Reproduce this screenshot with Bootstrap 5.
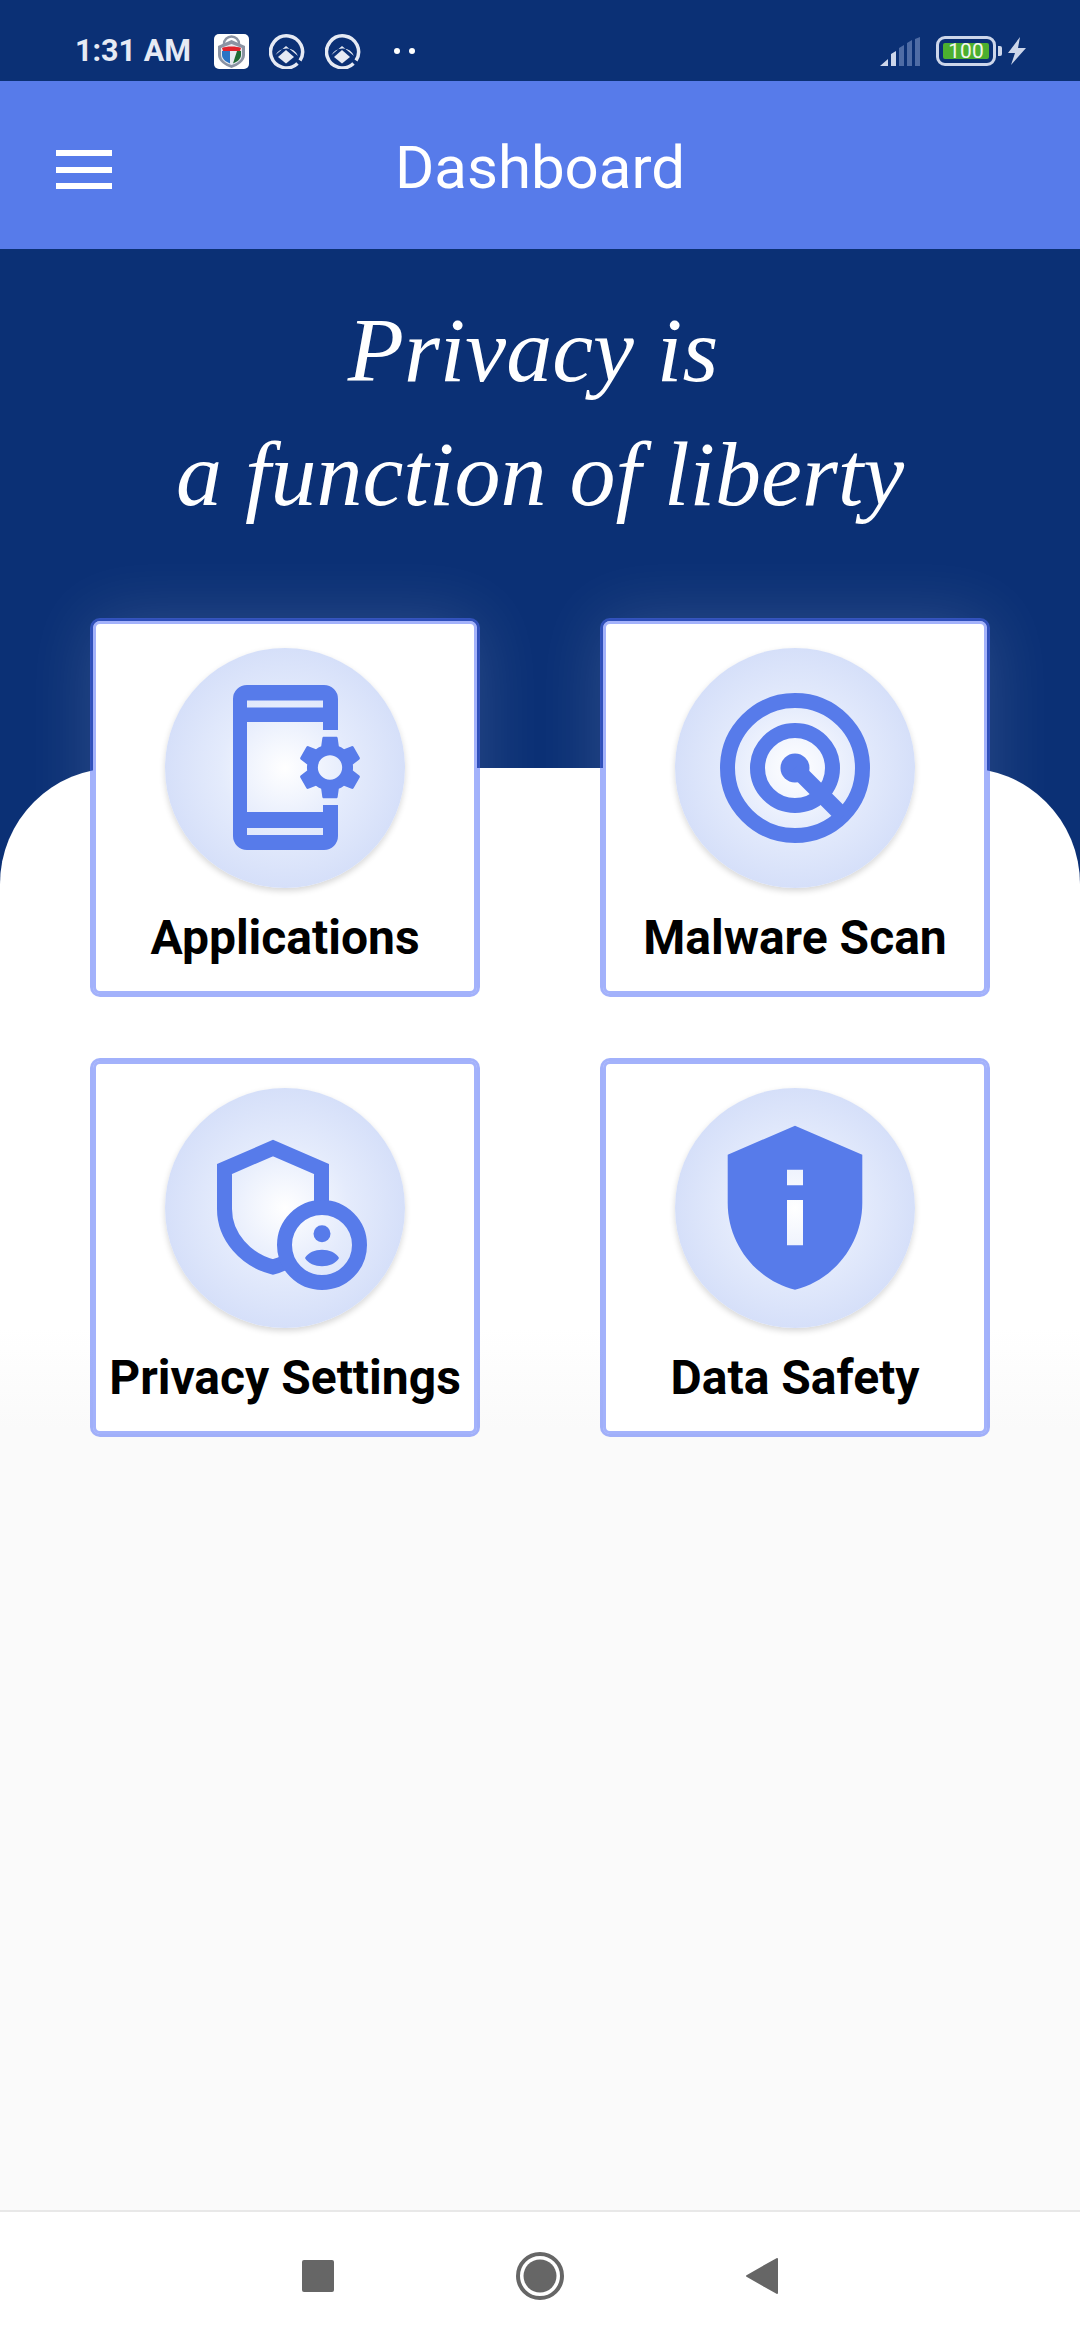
<!DOCTYPE html>
<html lang="en">

<head>
    <meta charset="UTF-8">
    <meta name="viewport" content="width=device-width, initial-scale=1.0">
    <title>Dashboard</title>
    <link href="https://cdn.jsdelivr.net/npm/bootstrap@5.3.0/dist/css/bootstrap.min.css" rel="stylesheet">
    <style>
        body {
            font-family: Roboto, "Liberation Sans", sans-serif;
            background-color: #fafafa;
            width: 1080px;
            height: 2340px;
            overflow: hidden;
        }

        .phone-screen {
            height: 2340px;
            background-color: #0b3075;
        }

        .status-strip {
            height: 81px;
            padding: 21px 54px 0 75px;
            color: #e6eaf4;
        }

        .status-time {
            font-size: 30.500px;
            font-weight: 700;
            width: 119px;
            white-space: nowrap;
        }

        .status-logo {
            margin-left: 20px;
            margin-right: 20px;
        }

        .status-dots {
            margin-left: 32px;
        }

        .battery-box {
            width: 60px;
            height: 30px;
            border: 3px solid #cdd6ea;
            border-radius: 9px;
            padding: 4px;
            margin-left: 16px;
        }

        .battery-level {
            background-color: #4caf2f;
            color: #f2f7ee;
            font-size: 21px;
            line-height: 16px;
            border-radius: 2px;
        }

        .battery-nub {
            width: 4px;
            height: 10px;
            background-color: #cdd6ea;
            border-radius: 0 2px 2px 0;
            margin-left: 2px;
            margin-right: 6px;
        }

        .title-strip {
            height: 168px;
            background-color: #577bea;
            color: #fff;
            padding-top: 5px;
        }

        .menu-bars {
            left: 56px;
            top: 69px;
            width: 56px;
        }

        .menu-bars span {
            display: block;
            height: 6px;
            background-color: #fff;
            margin-bottom: 10.5px;
        }

        .title-text {
            font-size: 60px;
            line-height: 1;
        }

        .quote-band {
            height: 519px;
            padding-top: 39px;
            color: #fff;
            font-family: "Liberation Serif", serif;
            font-style: italic;
            font-size: 92px;
            line-height: 124px;
        }

        .quote-first {
            display: inline-block;
            margin-right: 14px;
        }

        .sheet {
            border-radius: 116px 116px 0 0;
            background: linear-gradient(#fff 560px, #fafafa 660px);
        }

        .tile-grid {
            display: grid;
            grid-template-columns: 390px 390px;
            column-gap: 120px;
            row-gap: 61px;
            justify-content: center;
            margin-top: -150px;
        }

        .tile {
            height: 379px;
            border: 3px solid rgba(80, 108, 247, .53);
            border-radius: 10px;
            background-color: #fff;
            background-clip: padding-box;
            box-shadow: inset 0 0 0 3px #a3b2fb, 0 0 70px rgba(255, 255, 255, .14);
            padding-top: 27px;
        }

        .tile-disc {
            width: 240px;
            height: 240px;
            background: radial-gradient(circle, #fff 0, #e4ebfc 38%, #d5dff9 72%, #ccd8f6 100%);
            box-shadow: 0 3px 6px rgba(0, 0, 0, .16);
        }

        .tile-disc svg {
            display: block;
        }

        .tile-name {
            font-size: 48px;
            font-weight: 700;
            line-height: 54px;
            color: #000;
            margin-top: 23px;
            white-space: nowrap;
        }

        .nav-strip {
            height: 130px;
            background-color: #fff;
            border-top: 2px solid #e8e8e8;
            gap: 182px;
        }
    </style>
</head>

<body>
    <div class="phone-screen d-flex flex-column">
        <!-- status bar -->
        <div class="status-strip d-flex align-items-center flex-shrink-0">
            <span class="status-time">1:31 AM</span>
            <svg class="status-logo" width="35" height="35" viewBox="0 0 35 35">
                <rect width="35" height="35" rx="5" fill="#fff" />
                <path d="M10 13V10a7.500 7.500 0 0 1 15 0v3" fill="none" stroke="#8b93a3" stroke-width="2.500" />
                <path d="M17.500 6 L31 12 V21 C31 27 24 32 17.500 34 C11 32 4 27 4 21 V12Z" fill="#8b93a3" />
                <path d="M17.500 10 L28 14 V21 C28 26 23 29.500 17.500 31 C12 29.500 7 26 7 21 V14Z" fill="#e8ebf0" />
                <path d="M8 14 C12 12 23 12 27 14 L26 17 H9Z" fill="#e0242c" />
                <path d="M8 17 H16 V29.500 C12 28 8 25 8 21Z" fill="#2a74c4" />
                <path d="M27 17 V21 C27 25 23 28 19 29.500 L23 17Z" fill="#1f6b33" />
            </svg>
            <svg width="36" height="36" viewBox="0 0 36 36">
                <path d="M28.500 30.500A16 16 0 1 1 31 27.500" fill="none" stroke="#e6eaf4" stroke-width="3.500" />
                <path d="M6.500 22L17 13L29 23A12.500 12.500 0 0 0 6.500 22Z" fill="#e6eaf4" />
                <path d="M17 17L25 24L17 30.500L9 24Z" fill="#e6eaf4" />
            </svg>
            <svg class="ms-3 ps-1" width="40" height="36" viewBox="0 0 36 36">
                <path d="M28.500 30.500A16 16 0 1 1 31 27.500" fill="none" stroke="#e6eaf4" stroke-width="3.500" />
                <path d="M6.500 22L17 13L29 23A12.500 12.500 0 0 0 6.500 22Z" fill="#e6eaf4" />
                <path d="M17 17L25 24L17 30.500L9 24Z" fill="#e6eaf4" />
            </svg>
            <svg class="status-dots" width="24" height="8" viewBox="0 0 24 8">
                <circle cx="4" cy="4" r="3" fill="#fff" />
                <circle cx="19" cy="4" r="3" fill="#fff" />
            </svg>
            <div class="ms-auto d-flex align-items-center">
                <svg width="40" height="29" viewBox="0 0 40 29">
                    <path d="M0 29 L8 22 V29Z M11 17 L16 14 V29 H11Z" fill="#cdd6ea" />
                    <path d="M19 11 L24 8 V29 H19Z M27 6 L32 3 V29 H27Z M35 2 L40 0 V29 H35Z" fill="#4f6ca5" />
                </svg>
                <div class="battery-box">
                    <div class="battery-level text-center">100</div>
                </div>
                <div class="battery-nub"></div>
                <svg width="18" height="28" viewBox="0 0 18 28">
                    <path d="M12 0 L0 16 H7 L3 28 L18 11 H10Z" fill="#cdd6ea" />
                </svg>
            </div>
        </div>

        <!-- app bar -->
        <div class="title-strip position-relative d-flex align-items-center justify-content-center flex-shrink-0">
            <div class="menu-bars position-absolute"><span></span><span></span><span></span></div>
            <div class="title-text">Dashboard</div>
        </div>

        <!-- quote on the dark band -->
        <div class="quote-band text-center flex-shrink-0"><span class="quote-first">Privacy is</span><br>a function of liberty</div>

        <!-- white sheet, the tiles hang over its top edge -->
        <div class="sheet flex-grow-1">
            <div class="tile-grid">
                <div class="tile d-flex flex-column align-items-center">
                    <div class="tile-disc rounded-circle">
                        <svg width="240" height="240" viewBox="1 1 240 240" fill="#577bea">
                            <path fill-rule="evenodd" d="M83 38H160a14 14 0 0 1 14 14V83H159V75H83V165H159V158H174V189a14 14 0 0 1-14 14H83a14 14 0 0 1-14-14V52a14 14 0 0 1 14-14ZM83 53.500V60.500H159V53.500ZM83 181V188H159V181Z" />
                            <path transform="translate(127.600 82.100) scale(3.200)" d="M19.140 12.940c.04-.3.06-.61.06-.94 0-.32-.02-.64-.07-.94l2.030-1.580c.18-.14.23-.41.12-.61l-1.920-3.320c-.12-.22-.37-.29-.59-.22l-2.390.96c-.5-.38-1.030-.7-1.620-.94l-.36-2.540c-.04-.24-.24-.41-.48-.41h-3.840c-.24 0-.43.17-.47.41l-.36 2.540c-.59.24-1.130.57-1.620.94l-2.390-.96c-.22-.08-.47 0-.59.22L2.740 8.870c-.12.21-.08.47.12.61l2.030 1.580c-.05.3-.09.63-.09.94s.02.64.07.94l-2.030 1.580c-.18.14-.23.41-.12.61l1.920 3.320c.12.22.37.29.59.22l2.390-.96c.5.38 1.030.7 1.620.94l.36 2.540c.05.24.24.41.48.41h3.840c.24 0 .44-.17.47-.41l.36-2.540c.59-.24 1.130-.56 1.620-.94l2.390.96c.22.08.47 0 .59-.22l1.920-3.320c.12-.22.07-.47-.12-.61l-2.010-1.580zM12 15.800c-2.100 0-3.800-1.700-3.800-3.800s1.700-3.800 3.800-3.800 3.800 1.700 3.800 3.800-1.700 3.800-3.800 3.800z" />
                        </svg>
                    </div>
                    <div class="tile-name">Applications</div>
                </div>
                <div class="tile d-flex flex-column align-items-center">
                    <div class="tile-disc rounded-circle">
                        <svg width="240" height="240" viewBox="1 1 240 240" fill="none" stroke="#577bea" stroke-width="15">
                            <circle cx="121" cy="121" r="67.500" />
                            <circle cx="121" cy="121" r="37.500" />
                            <circle cx="121" cy="121" r="14.500" fill="#577bea" stroke="none" />
                            <path d="M121 121L169 169" stroke-width="16" />
                        </svg>
                    </div>
                    <div class="tile-name">Malware Scan</div>
                </div>
                <div class="tile d-flex flex-column align-items-center">
                    <div class="tile-disc rounded-circle">
                        <svg width="240" height="240" viewBox="1 1 240 240" fill="none" stroke="#577bea" stroke-width="15">
                            <path d="M157.500 116V82L109 61L60.500 82V122C60.500 150 82 173 109 180C113 179 118 177 124 174" />
                            <circle cx="158" cy="158" r="37.500" />
                            <circle cx="158" cy="146.700" r="8.500" fill="#577bea" stroke="none" />
                            <path d="M141 171C147 160 169 160 175 171C169 182 147 182 141 171Z" fill="#577bea" stroke="none" />
                        </svg>
                    </div>
                    <div class="tile-name">Privacy Settings</div>
                </div>
                <div class="tile d-flex flex-column align-items-center">
                    <div class="tile-disc rounded-circle">
                        <svg width="240" height="240" viewBox="1 1 240 240" fill="#577bea">
                            <path fill-rule="evenodd" d="M121 38.700L188.300 67.700V116C188.300 157 160 193 121 202.700C82 193 53.700 157 53.700 116V67.700ZM113 82.700V98.300H129V82.700ZM113 113V158.300H129V113Z" />
                        </svg>
                    </div>
                    <div class="tile-name">Data Safety</div>
                </div>
            </div>
        </div>

        <!-- android nav buttons -->
        <div class="nav-strip d-flex align-items-center justify-content-center flex-shrink-0">
            <svg width="32" height="32" viewBox="0 0 32 32">
                <rect width="32" height="32" rx="2" fill="#666" />
            </svg>
            <svg width="48" height="48" viewBox="0 0 48 48">
                <circle cx="24" cy="24" r="22" fill="none" stroke="#666" stroke-width="4" />
                <circle cx="24" cy="24" r="16.500" fill="#666" />
            </svg>
            <svg width="32" height="36" viewBox="0 0 32 36">
                <path d="M31 1V35L1 18Z" fill="#666" stroke="#666" stroke-width="2" stroke-linejoin="round" />
            </svg>
        </div>
    </div>
</body>

</html>
